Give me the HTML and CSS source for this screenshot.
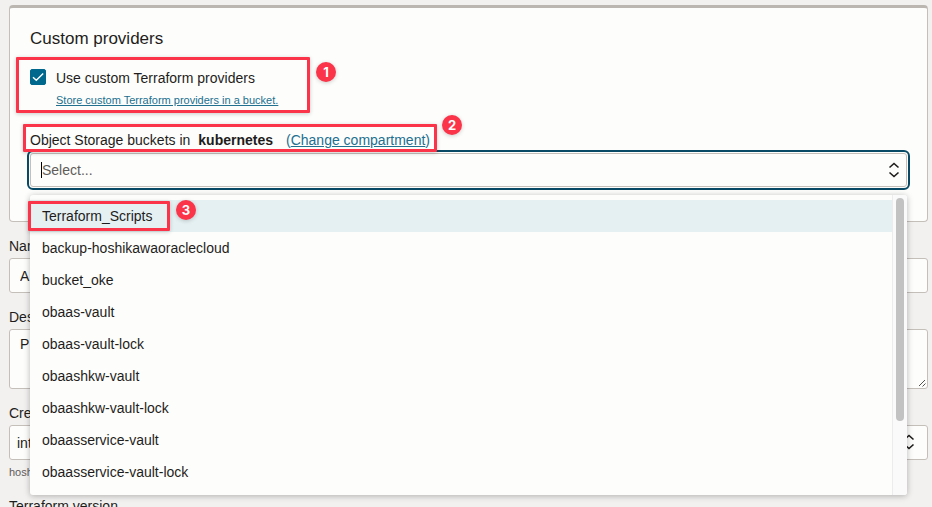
FILE: index.html
```html
<!DOCTYPE html>
<html lang="en">
<head>
    <meta charset="UTF-8">
    <meta name="viewport" content="width=device-width, initial-scale=1.0">
    <title>Create stack</title>
    <link rel="stylesheet" href="styles.css">
</head>
<body>
    <main class="page">
        <section class="card">
            <h2>Custom providers</h2>

            <div class="provider">
                <div class="check-row">
                    <span class="check-box">
                        <input type="checkbox" id="custom-providers" checked>
                        <svg class="tick" viewBox="0 0 16 16" aria-hidden="true">
                            <path d="M3 8.200 6.300 11.300 13.200 4.500"/>
                        </svg>
                    </span>
                    <label for="custom-providers">Use custom Terraform providers</label>
                </div>
                <a class="help-link" href="#">Store custom Terraform providers in a bucket.</a>
                <div class="mark mark-provider"><span class="badge">1</span></div>
            </div>

            <div class="bucket-label">
                <label for="bucket">Object Storage buckets in</label>
                <strong>kubernetes</strong>
                <a href="#">(<span>Change compartment</span>)</a>
                <div class="mark mark-bucket"><span class="badge">2</span></div>
            </div>

            <div class="combo">
                <input class="combo-input" type="text" id="bucket" role="combobox" aria-expanded="true" aria-controls="bucket-list" placeholder="Select...">
                <span class="caret"></span>
                <svg class="arrows" viewBox="0 0 12 16" aria-hidden="true">
                    <path d="M1.500 5.500 6 1.500l4.500 4M1.500 10.500l4.500 4 4.500-4"/>
                </svg>

                <div class="dropdown">
                    <ul class="options" id="bucket-list" role="listbox">
                        <li class="active" role="option" aria-selected="true">Terraform_Scripts<div class="mark mark-option"><span class="badge">3</span></div></li>
                        <li role="option">backup-hoshikawaoraclecloud</li>
                        <li role="option">bucket_oke</li>
                        <li role="option">obaas-vault</li>
                        <li role="option">obaas-vault-lock</li>
                        <li role="option">obaashkw-vault</li>
                        <li role="option">obaashkw-vault-lock</li>
                        <li role="option">obaasservice-vault</li>
                        <li role="option">obaasservice-vault-lock</li>
                    </ul>
                    <div class="scroll-track"><div class="scroll-thumb"></div></div>
                </div>
            </div>
        </section>

        <div class="field">
            <label for="name">Name</label>
            <input class="control" type="text" id="name" value="A">
        </div>

        <div class="field">
            <label for="description">Description</label>
            <div class="text-wrap">
                <textarea class="control" id="description">P</textarea>
                <svg class="grip" viewBox="0 0 8 8" aria-hidden="true">
                    <path d="M1 7 7 1M4.500 7.500l3-3"/>
                </svg>
            </div>
        </div>

        <div class="field">
            <label for="compartment">Create in compartment</label>
            <div class="select-wrap">
                <select class="control" id="compartment">
                    <option>int</option>
                </select>
                <svg class="arrows" viewBox="0 0 12 16" aria-hidden="true">
                    <path d="M1.500 5.500 6 1.500l4.500 4M1.500 10.500l4.500 4 4.500-4"/>
                </svg>
            </div>
            <p class="hint">hoshikawaoraclecloud</p>
        </div>

        <div class="field">
            <label for="version">Terraform version</label>
            <select class="control" id="version">
                <option></option>
            </select>
        </div>
    </main>
</body>
</html>
```
FILE: styles.css
```css
* {
    box-sizing: border-box;
}

body {
    margin: 0;
    height: 100vh;
    overflow: hidden;
    background-color: #f2f1f0;
    color: #1f1d1b;
    font-family: "Liberation Sans", Arial, sans-serif;
    font-size: 14px;
    line-height: 20px;
}

.page {
    padding: 5px 4px 0 9px;
}

a {
    color: #21708f;
}

.card {
    height: 217px;
    margin-bottom: 14px;
    padding: 21px 20px 20px;
    background-color: #fdfdfc;
    border: 1px solid #c5bfba;
    border-top: 3px solid #bcb6b0;
    border-radius: 4px;
}

h2 {
    margin: 0 0 19px;
    font-size: 17px;
    font-weight: 400;
    line-height: 20px;
}

/* checkbox block */
.provider {
    position: relative;
    margin-bottom: 18px;
}

.check-row {
    display: flex;
    align-items: center;
    gap: 10px;
}

.check-box {
    position: relative;
    width: 16px;
    height: 18px;
}

.check-box input {
    appearance: none;
    display: block;
    width: 16px;
    height: 16px;
    margin: 0;
    border: 1px solid #00688c;
    border-radius: 2px;
}

.check-box input:checked {
    background-color: #00688c;
}

.tick {
    position: absolute;
    top: 0;
    left: 0;
    width: 16px;
    height: 16px;
    fill: none;
    stroke: #fff;
    stroke-width: 1.4;
    pointer-events: none;
}

.help-link {
    display: block;
    width: max-content;
    margin-left: 26px;
    font-size: 11px;
    line-height: 24px;
}

.bucket-label {
    position: relative;
    display: flex;
    margin-bottom: 3px;
}

.bucket-label strong {
    margin: 0 13px 0 8px;
}

.bucket-label a {
    text-decoration: none;
}

.bucket-label a span {
    text-decoration: underline;
}

/* red numbered frames */
.mark {
    position: absolute;
    z-index: 3;
    border: 3px solid #fb3449;
    border-radius: 1px;
    box-shadow: 0 1px 4px rgba(0, 0, 0, 0.2);
    pointer-events: none;
}

.mark-provider {
    top: -11px;
    bottom: -1px;
    left: -14px;
    width: 294px;
}

.mark-bucket {
    top: -6px;
    bottom: -2px;
    left: -7px;
    width: 414px;
}

.mark-option {
    top: 1px;
    bottom: 1px;
    left: -2px;
    width: 142px;
}

.badge {
    position: absolute;
    top: 2px;
    left: calc(100% + 9px);
    width: 20px;
    height: 20px;
    border-radius: 50%;
    background-color: #fb3449;
    color: #fff;
    font-family: Inter, sans-serif;
    font-size: 13px;
    font-weight: 700;
    line-height: 20px;
    text-align: center;
    box-shadow: 0 1px 4px rgba(0, 0, 0, 0.2);
}

.mark-bucket .badge {
    top: -12px;
    left: calc(100% + 8px);
}

.mark-option .badge {
    top: -4px;
}

/* bucket picker */
.combo {
    position: relative;
}

.combo-input {
    display: block;
    width: 100%;
    height: 34px;
    padding: 0 32px 0 11px;
    border: 1px solid #c5bfba;
    border-radius: 3px;
    outline: 2px solid #084a65;
    outline-offset: 1px;
    background-color: #fdfdfc;
    font: inherit;
}

.combo-input::placeholder {
    color: #5f5c59;
}

.caret {
    position: absolute;
    top: 9px;
    left: 11px;
    width: 1px;
    height: 16px;
    background-color: #000;
}

.arrows {
    position: absolute;
    top: 9px;
    right: 7px;
    width: 12px;
    height: 16px;
    fill: none;
    stroke: #1f1d1b;
    stroke-width: 1.6;
    pointer-events: none;
}

.dropdown {
    position: absolute;
    top: 100%;
    left: 0;
    right: 0;
    z-index: 2;
    display: flex;
    margin-top: 8px;
    border-radius: 3px;
    background-color: #fdfdfc;
    box-shadow: 0 1px 6px rgba(0, 0, 0, 0.28);
}

.options {
    flex: 1;
    margin: 0;
    padding: 5px 0 7px;
    list-style: none;
}

.options li {
    position: relative;
    padding: 6px 12px;
}

.options .active {
    background-color: #e5f0f3;
}

.scroll-track {
    width: 15px;
    padding: 3px;
    border-left: 1px solid #ececec;
    border-radius: 0 3px 3px 0;
    background-color: #fafafa;
}

.scroll-thumb {
    height: 76%;
    border-radius: 4px;
    background-color: #c2c2c2;
}

/* rest of the form */
.field {
    margin-bottom: 14px;
}

.field label {
    display: block;
    margin-bottom: 2px;
}

.control {
    display: block;
    width: 100%;
    height: 35px;
    padding: 0 10px;
    border: 1px solid #c5bfba;
    border-radius: 3px;
    background-color: #fdfdfc;
    color: inherit;
    font: inherit;
}

textarea.control {
    height: 60px;
    padding-top: 4px;
    resize: none;
}

select.control {
    appearance: none;
    padding: 0 7px;
}

.text-wrap,
.select-wrap {
    position: relative;
}

.select-wrap .arrows {
    right: 13px;
}

.grip {
    position: absolute;
    right: 2px;
    bottom: 2px;
    width: 8px;
    height: 8px;
    fill: none;
    stroke: #55524f;
}

.hint {
    margin: 2px 0 0;
    color: #5f5c59;
    font-size: 11px;
}
```
